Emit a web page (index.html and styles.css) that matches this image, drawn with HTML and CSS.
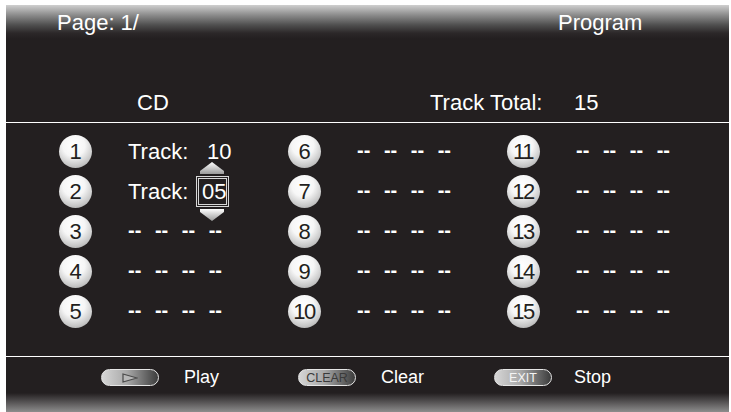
FILE: index.html
```html
<!DOCTYPE html>
<html>
<head>
<meta charset="utf-8">
<link rel="stylesheet" href="styles.css">
</head>
<body>
<div class="screen">
  <div class="top"><span class="page">Page: 1/</span><span>Program</span></div>
  <div class="info"><span class="src">CD</span><span class="total-label">Track Total:</span><span>15</span></div>
  <div class="rule"></div>
  <div class="grid">
    <div class="cell"><span class="num">1</span><div class="slot"><span class="tlabel">Track:</span><span class="val">10</span></div></div>
    <div class="cell"><span class="num">2</span><div class="slot"><span class="tlabel">Track:</span><span class="val edit">05
      <svg class="arrow up" width="24" height="12" viewBox="0 0 24 12"><defs><linearGradient id="gu" x1="0" y1="0" x2="0" y2="1"><stop offset="0" stop-color="#ffffff"/><stop offset="1" stop-color="#9a9a9a"/></linearGradient></defs><polygon points="12,0 24,9 24,12 0,12 0,9" fill="url(#gu)"/></svg>
      <svg class="arrow down" width="24" height="12" viewBox="0 0 24 12"><defs><linearGradient id="gd" x1="0" y1="0" x2="0" y2="1"><stop offset="0" stop-color="#ffffff"/><stop offset="1" stop-color="#9a9a9a"/></linearGradient></defs><polygon points="0,0 24,0 24,3 12,12 0,3" fill="url(#gd)"/></svg>
    </span></div></div>
    <div class="cell"><span class="num">3</span><div class="slot dashes">-- -- -- --</div></div>
    <div class="cell"><span class="num">4</span><div class="slot dashes">-- -- -- --</div></div>
    <div class="cell"><span class="num">5</span><div class="slot dashes">-- -- -- --</div></div>
    <div class="cell"><span class="num">6</span><div class="slot dashes">-- -- -- --</div></div>
    <div class="cell"><span class="num">7</span><div class="slot dashes">-- -- -- --</div></div>
    <div class="cell"><span class="num">8</span><div class="slot dashes">-- -- -- --</div></div>
    <div class="cell"><span class="num">9</span><div class="slot dashes">-- -- -- --</div></div>
    <div class="cell"><span class="num two">10</span><div class="slot dashes">-- -- -- --</div></div>
    <div class="cell"><span class="num two">11</span><div class="slot dashes">-- -- -- --</div></div>
    <div class="cell"><span class="num two">12</span><div class="slot dashes">-- -- -- --</div></div>
    <div class="cell"><span class="num two">13</span><div class="slot dashes">-- -- -- --</div></div>
    <div class="cell"><span class="num two">14</span><div class="slot dashes">-- -- -- --</div></div>
    <div class="cell"><span class="num two">15</span><div class="slot dashes">-- -- -- --</div></div>
  </div>
  <div class="rule rule-bottom"></div>
  <div class="footer">
    <div class="act act-play"><span class="pill"><svg width="16" height="10" viewBox="0 0 16 10"><polygon points="1,1 15,5 1,9" fill="#b8b8b8" stroke="#4a4a4a" stroke-width="1.2"/></svg></span><span>Play</span></div>
    <div class="act act-clear"><span class="pill pill-dark">CLEAR</span><span>Clear</span></div>
    <div class="act act-stop"><span class="pill pill-light">EXIT</span><span>Stop</span></div>
  </div>
</div>
</body>
</html>
```
FILE: styles.css
```css
html, body {
  margin: 0;
  padding: 0;
  background: #ffffff;
}
body {
  font-family: "Liberation Sans", Arial, sans-serif;
}
.screen {
  margin: 5px 0 0 6px;
  width: 723px;
  height: 407px;
  color: #ffffff;
  font-size: 22px;
  line-height: 25px;
  background: linear-gradient(to bottom,
    #cfcfcf 0px, #8c8c8c 10px, #4f4f4f 20px, #2c2829 28px, #231f20 34px,
    #231f20 calc(100% - 19px), #4a4748 calc(100% - 12px), #8d8d8d 100%);
  display: flex;
  flex-direction: column;
}
.top {
  display: flex;
  padding: 5px 0 0 51px;
  height: 31px;
}
.page {
  width: 501px;
}
.info {
  display: flex;
  margin-top: 49px;
  padding-left: 131px;
  height: 25px;
}
.src { width: 293px; }
.total-label { width: 144px; }
.rule {
  height: 1px;
  background: #ffffff;
  margin-top: 7px;
}
.grid {
  margin-top: 8px;
  padding-left: 53px;
  display: grid;
  grid-template-columns: 229px 219px 1fr;
  grid-template-rows: repeat(5, 40px);
  grid-auto-flow: column;
}
.cell {
  display: flex;
  align-items: center;
}
.num {
  width: 33px;
  height: 33px;
  border-radius: 50%;
  background: radial-gradient(circle at 45% 32%, #ffffff 0%, #f6f6f6 38%, #c4c4c4 72%, #8a8a8a 100%);
  color: #231f20;
  font-size: 22px;
  line-height: 33px;
  text-align: center;
  flex: none;
}
.num.two {
  letter-spacing: -1.5px;
  text-indent: -1px;
}
.slot {
  margin-left: 36px;
  display: flex;
  align-items: center;
}
.tlabel {
  width: 68px;
}
.val {
  width: 33px;
  box-sizing: border-box;
  padding-left: 11px;
}
.val.edit {
  position: relative;
  height: 31px;
  line-height: 25px;
  border: 3px double #d8d8d8;
  padding-left: 3px;
}
.arrow {
  position: absolute;
  left: 1px;
}
.arrow.up { top: -17px; }
.arrow.down { bottom: -17px; }
.dashes {
  font-size: 20px;
  font-weight: bold;
  word-spacing: 8px;
  padding-bottom: 2px;
}
.rule-bottom {
  margin-top: 25px;
}
.footer {
  display: flex;
  align-items: center;
  padding-left: 95px;
  height: 41px;
  font-size: 18px;
}
.act {
  display: flex;
  align-items: center;
  gap: 25px;
}
.act-play { width: 197px; }
.act-clear { width: 196px; }
.act-stop { gap: 22px; }
.pill {
  width: 58px;
  height: 17px;
  box-sizing: border-box;
  border: 1.5px solid #e6e6e6;
  border-radius: 9px;
  background: linear-gradient(to right, #d6d6d6 0%, #a8a8a8 45%, #3c3c3c 100%);
  display: flex;
  align-items: center;
  justify-content: center;
  font-size: 12.5px;
  line-height: 14px;
}
.pill-dark { color: #3a3a3a; }
.pill-light { color: #f4f4f4; }
```
